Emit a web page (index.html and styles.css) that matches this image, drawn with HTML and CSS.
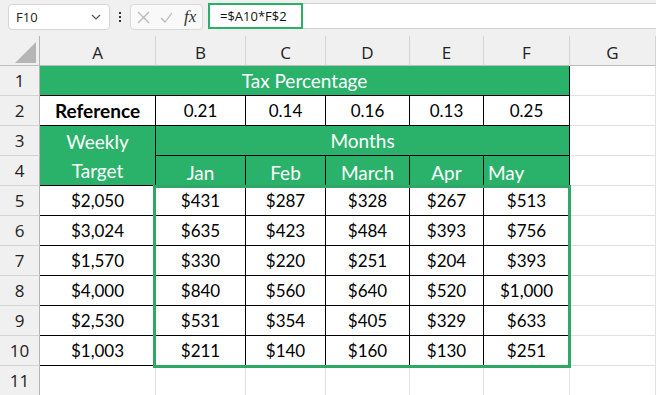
FILE: index.html
```html
<!DOCTYPE html>
<html lang="en">
<head>
    <meta charset="UTF-8">
    <title>Tax Percentage - Sheet</title>
    <link rel="stylesheet" href="styles.css">
</head>
<body>
    <div class="formula-bar">
        <div class="name-box">
            <span>F10</span>
            <svg class="chevron" width="10" height="6" viewBox="0 0 10 6"><path d="M1 1 L5 5 L9 1" fill="none" stroke="#555" stroke-width="1.2"/></svg>
        </div>
        <div class="dots"><i></i><i></i><i></i></div>
        <div class="fx-box">
            <svg width="13" height="13" viewBox="0 0 13 13"><path d="M1 1 L12 12 M12 1 L1 12" stroke="#b9b9b9" stroke-width="1.2" fill="none"/></svg>
            <svg width="13" height="11" viewBox="0 0 13 11"><path d="M1 6 L5 10 L12 1" stroke="#b9b9b9" stroke-width="1.2" fill="none"/></svg>
            <span class="fx">fx</span>
        </div>
        <div class="formula-input">
            <div class="formula-text">=$A10*F$2</div>
        </div>
    </div>

    <div class="sheet">
        <div class="grid">
            <!-- column headers -->
            <div class="corner"><span class="tri"></span></div>
            <div class="col-h">A</div>
            <div class="col-h">B</div>
            <div class="col-h">C</div>
            <div class="col-h">D</div>
            <div class="col-h">E</div>
            <div class="col-h">F</div>
            <div class="col-h">G</div>

            <!-- row 1 -->
            <div class="row-h">1</div>
            <div class="c t green word span6">Tax Percentage</div>
            <div class="c"></div>

            <!-- row 2 -->
            <div class="row-h">2</div>
            <div class="c t word bold">Reference</div>
            <div class="c t">0.21</div>
            <div class="c t">0.14</div>
            <div class="c t">0.16</div>
            <div class="c t">0.13</div>
            <div class="c t">0.25</div>
            <div class="c"></div>

            <!-- row 3 / 4 -->
            <div class="row-h">3</div>
            <div class="c t green word weekly">Weekly<br>Target</div>
            <div class="c t green word span5">Months</div>
            <div class="c"></div>

            <div class="row-h">4</div>
            <div class="c t green word low">Jan</div>
            <div class="c t green word low">Feb</div>
            <div class="c t green word low">March</div>
            <div class="c t green word low">Apr</div>
            <div class="c t green word low left">May</div>
            <div class="c"></div>

            <!-- data -->
            <div class="row-h">5</div>
            <div class="c t">$2,050</div><div class="c t">$431</div><div class="c t">$287</div><div class="c t">$328</div><div class="c t">$267</div><div class="c t">$513</div><div class="c"></div>
            <div class="row-h">6</div>
            <div class="c t">$3,024</div><div class="c t">$635</div><div class="c t">$423</div><div class="c t">$484</div><div class="c t">$393</div><div class="c t">$756</div><div class="c"></div>
            <div class="row-h">7</div>
            <div class="c t">$1,570</div><div class="c t">$330</div><div class="c t">$220</div><div class="c t">$251</div><div class="c t">$204</div><div class="c t">$393</div><div class="c"></div>
            <div class="row-h">8</div>
            <div class="c t">$4,000</div><div class="c t">$840</div><div class="c t">$560</div><div class="c t">$640</div><div class="c t">$520</div><div class="c t">$1,000</div><div class="c"></div>
            <div class="row-h">9</div>
            <div class="c t">$2,530</div><div class="c t">$531</div><div class="c t">$354</div><div class="c t">$405</div><div class="c t">$329</div><div class="c t">$633</div><div class="c"></div>
            <div class="row-h">10</div>
            <div class="c t">$1,003</div><div class="c t">$211</div><div class="c t">$140</div><div class="c t">$160</div><div class="c t">$130</div><div class="c t">$251</div><div class="c"></div>

            <!-- row 11 -->
            <div class="row-h">11</div>
            <div class="c"></div><div class="c"></div><div class="c"></div><div class="c"></div><div class="c"></div><div class="c"></div><div class="c"></div>
        </div>
        <!-- selected range B5:F10 -->
        <div class="selection"></div>
    </div>
</body>
</html>
```

FILE: styles.css
```css
body {
    margin: 0;
    background: #f0f0f0;
    font-family: 'Open Sans', 'Noto Sans', sans-serif;
    overflow: hidden;
}

/* formula bar */
.formula-bar {
    height: 36px;
    display: flex;
    align-items: flex-start;
    padding-top: 4px;
    box-sizing: border-box;
}
.name-box {
    margin-left: 8px;
    width: 102px;
    height: 26px;
    box-sizing: border-box;
    background: #fff;
    border: 1px solid #d6d6d6;
    border-radius: 4px;
    display: flex;
    align-items: center;
    justify-content: space-between;
    padding: 0 8px 0 7px;
    font-size: 13px;
    color: #222;
}
.dots {
    width: 20px;
    height: 26px;
    display: flex;
    flex-direction: column;
    align-items: center;
    justify-content: center;
    gap: 2px;
}
.dots i {
    width: 2px;
    height: 2px;
    background: #333;
}
.fx-box {
    width: 73px;
    height: 26px;
    box-sizing: border-box;
    background: #f9f9f9;
    border: 1px solid #d9d9d9;
    border-radius: 4px;
    display: flex;
    align-items: center;
    gap: 10px;
    padding-left: 6px;
}
.fx {
    font-family: 'Liberation Serif', serif;
    font-style: italic;
    font-size: 17px;
    color: #333;
    margin-left: 1px;
}
.formula-input {
    flex: 1;
    margin-left: 5px;
    height: 26px;
    box-sizing: border-box;
    background: #fff;
    border-top: 1px solid #d0d0d0;
    border-bottom: 1px solid #d0d0d0;
    margin-top: -1px;
}
.formula-text {
    width: 95px;
    height: 26px;
    margin-top: -1px;
    box-sizing: border-box;
    border: 2px solid #2bb06a;
    padding-left: 10px;
    line-height: 22px;
    font-size: 13px;
    color: #111;
}

/* sheet */
.sheet {
    position: relative;
}
.grid {
    display: grid;
    grid-template-columns: 40px 116px 90px 80px 84px 74px 86px 1fr;
    grid-auto-rows: 30px;
}
.grid > div {
    box-sizing: border-box;
}
.corner {
    border-right: 1px solid #b4b4b4;
    border-bottom: 1px solid #bdbdbd;
    position: relative;
}
.tri {
    position: absolute;
    left: 15px;
    top: 6px;
    width: 21px;
    height: 21px;
    background: #b5b5b5;
    clip-path: polygon(100% 0, 100% 100%, 0 100%);
}
.col-h {
    background: #f0f0f0;
    border-right: 1px solid #d4d4d4;
    border-bottom: 1px solid #bdbdbd;
    display: flex;
    align-items: center;
    justify-content: center;
    padding-top: 3px;
    font-size: 17px;
    color: #222;
}
.row-h {
    background: #f0f0f0;
    border-right: 1px solid #b4b4b4;
    border-bottom: 1px solid #d4d4d4;
    display: flex;
    align-items: center;
    justify-content: center;
    font-size: 17px;
    color: #222;
}
.c {
    background: #fff;
    border-right: 1px solid #e1e1e1;
    border-bottom: 1px solid #e1e1e1;
    display: flex;
    align-items: center;
    justify-content: center;
    font-family: 'Lato', 'Liberation Sans', sans-serif;
    font-size: 17px;
    color: #000;
}
.c.t {
    border-right-color: #000;
    border-bottom-color: #000;
}
.word { font-size: 19px; }
.green {
    background: #2ab26a;
    color: #fff;
}
.bold { font-weight: 700; }
.span6 { grid-column: span 6; }
.span5 { grid-column: span 5; }
.weekly {
    grid-row: span 2;
    text-align: center;
    line-height: 29px;
}
.low { padding-top: 3px; }
.left {
    justify-content: flex-start;
    padding-left: 4px;
}

.selection {
    position: absolute;
    left: 153px;
    top: 149px;
    width: 418px;
    height: 183px;
    box-sizing: border-box;
    border: 3px solid #2fa865;
    pointer-events: none;
}
```
